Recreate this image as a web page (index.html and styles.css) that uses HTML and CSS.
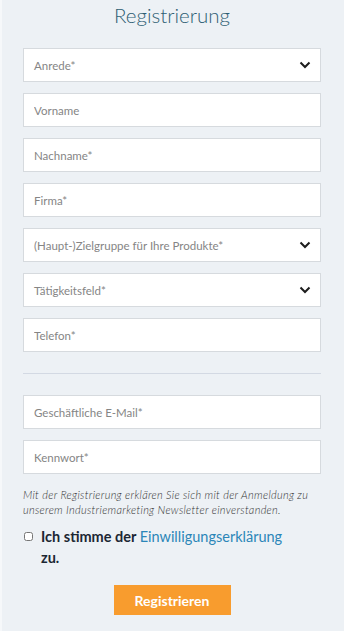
FILE: index.html
```html
<!DOCTYPE html>
<html lang="de">
<head>
  <meta charset="UTF-8">
  <meta name="viewport" content="width=device-width, initial-scale=1.0">
  <title>Registrierung</title>
  <link rel="stylesheet" href="styles.css">
</head>
<body>
  <div class="panel">
    <h2 class="title">Registrierung</h2>
    <form class="form">
      <!-- Persoenliche Daten -->
      <div class="select">
        <span>Anrede*</span>
        <svg viewBox="0 0 12 8" width="12" height="8"><path d="M1.5 1.5 L6 6 L10.5 1.5" fill="none" stroke="#1d1d1d" stroke-width="2"/></svg>
      </div>
      <input type="text" class="field" placeholder="Vorname">
      <input type="text" class="field" placeholder="Nachname*">
      <input type="text" class="field" placeholder="Firma*">
      <div class="select">
        <span>(Haupt-)Zielgruppe für Ihre Produkte*</span>
        <svg viewBox="0 0 12 8" width="12" height="8"><path d="M1.5 1.5 L6 6 L10.5 1.5" fill="none" stroke="#1d1d1d" stroke-width="2"/></svg>
      </div>
      <div class="select">
        <span>Tätigkeitsfeld*</span>
        <svg viewBox="0 0 12 8" width="12" height="8"><path d="M1.5 1.5 L6 6 L10.5 1.5" fill="none" stroke="#1d1d1d" stroke-width="2"/></svg>
      </div>
      <input type="text" class="field" placeholder="Telefon*">

      <hr class="divider">

      <!-- Zugangsdaten -->
      <input type="email" class="field" placeholder="Geschäftliche E-Mail*">
      <input type="password" class="field" placeholder="Kennwort*">

      <p class="note">Mit der Registrierung erklären Sie sich mit der Anmeldung zu unserem Industriemarketing Newsletter einverstanden.</p>

      <label class="consent">
        <input type="checkbox" class="check">
        <span>Ich stimme der <a href="#">Einwilligungserklärung</a> zu.</span>
      </label>

      <div class="actions">
        <button type="button" class="btn">Registrieren</button>
      </div>
    </form>
  </div>
</body>
</html>
```

FILE: styles.css
```css
body {
  margin: 0;
  background: #edf1f5;
  font-family: Lato, Arial, sans-serif;
}

a {
  color: #2b86b8;
  text-decoration: none;
}

.panel {
  min-height: 631px;
  box-sizing: border-box;
  border-left: 2px solid #f6f8fa;
  padding: 0 23px 0 21px;
}

.title {
  margin: 0;
  padding-top: 2px;
  text-align: center;
  font-size: 20.5px;
  line-height: 26px;
  font-weight: 300;
  color: #2d5e73;
}

.form {
  display: flex;
  flex-direction: column;
  gap: 11px;
  margin-top: 20px;
}

.field,
.select {
  box-sizing: border-box;
  height: 34px;
  width: 100%;
  margin: 0;
  padding: 0 10px;
  border: 1px solid #d6dade;
  background: #fff;
  font-family: inherit;
  font-size: 11.5px;
  font-weight: 400;
  color: #858585;
}

.field::placeholder {
  color: #858585;
}

.select {
  display: flex;
  align-items: center;
  justify-content: space-between;
  padding-right: 9px;
}

.divider {
  margin: 10px 0;
  border: 0;
  border-top: 1px solid #d3d9e3;
}

.note {
  margin: 2px 0 0 0;
  font-size: 11px;
  line-height: 15px;
  letter-spacing: 0.3px;
  font-style: italic;
  font-weight: 300;
  color: #333;
}

.consent {
  display: flex;
  align-items: flex-start;
  gap: 8px;
  margin-top: -2px;
  width: 265px;
  font-size: 14.5px;
  line-height: 21px;
  font-weight: 700;
  color: #1c2733;
}

.consent a {
  font-weight: 400;
}

.check {
  margin: 6px 0 0 1px;
  width: 9px;
  height: 9px;
}

.actions {
  display: flex;
  justify-content: center;
  margin-top: 6px;
}

.btn {
  width: 117px;
  height: 30px;
  border: none;
  background-color: #f89c2e;
  color: white;
  font-family: inherit;
  font-size: 14px;
  font-weight: 700;
  cursor: pointer;
}
```
